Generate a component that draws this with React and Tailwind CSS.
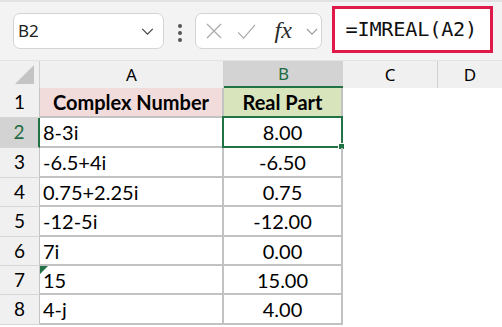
import { Fragment } from "react";

const rows = [
  { n: 1, a: "Complex Number", b: "Real Part", h: "h-[30px]", head: true },
  { n: 2, a: "8-3i", b: "8.00", h: "h-[30px]", selected: true },
  { n: 3, a: "-6.5+4i", b: "-6.50", h: "h-[30px]" },
  { n: 4, a: "0.75+2.25i", b: "0.75", h: "h-[29px]" },
  { n: 5, a: "-12-5i", b: "-12.00", h: "h-[30px]" },
  { n: 6, a: "7i", b: "0.00", h: "h-[29px]" },
  { n: 7, a: "15", b: "15.00", h: "h-[29px]", flag: true },
  { n: 8, a: "4-j", b: "4.00", h: "h-[30px]" }
];

function Chevron({ className }) {
  return (
    <svg viewBox="0 0 14 8" className={className} fill="none" stroke="currentColor" strokeWidth="1.4">
      <path d="M1 1l6 6 6-6" />
    </svg>
  );
}

export default function App() {

  return (

    <div className="w-[502px] h-[327px] overflow-hidden bg-white font-['Lato',sans-serif] text-black">

      {/* TOOLBAR */}

      <div className="h-[60px] bg-[#f3f3f3] border-t-2 border-[#e2e2e2] flex items-start">

        <div className="ml-[13px] mt-[11px] w-[151px] h-[36px] bg-white border border-[#d4d4d4] rounded-[7px] flex items-center justify-between pl-[4px] pr-[9px]">
          <span className="font-['Noto_Sans',sans-serif] text-[17px] text-[#222]">B2</span>
          <Chevron className="w-[13px] h-[7px] text-[#444]" />
        </div>

        <div className="ml-[14px] mt-[22px] flex flex-col gap-[3.5px]">
          <span className="w-[3.5px] h-[3.5px] rounded-full bg-[#555]" />
          <span className="w-[3.5px] h-[3.5px] rounded-full bg-[#555]" />
          <span className="w-[3.5px] h-[3.5px] rounded-full bg-[#555]" />
        </div>

        <div className="ml-[13px] mt-[11px] w-[127px] h-[36px] bg-white border border-[#d4d4d4] rounded-[7px] flex items-center pl-[9px]">
          <svg viewBox="0 0 18 18" className="w-[18px] h-[18px]" fill="none" stroke="#a8a8a8" strokeWidth="1.2">
            <path d="M2 2l14 14M16 2L2 16" />
          </svg>
          <svg viewBox="0 0 20 16" className="ml-[14px] w-[19px] h-[15px]" fill="none" stroke="#a8a8a8" strokeWidth="1.2">
            <path d="M1 9l6 6L19 1" />
          </svg>
          <span className="ml-[19px] font-['Liberation_Serif',serif] italic text-[24px] leading-none text-[#2a2a2a] -mt-[3px]">fx</span>
          <Chevron className="ml-[14px] w-[12px] h-[7px] text-[#999]" />
        </div>

        <div className="ml-[10px] mt-[4px] w-[161px] h-[47px] bg-white border-[3px] border-[#e0194b] flex items-center pl-[11px]">
          <span className="font-['DejaVu_Sans_Mono',monospace] text-[20.2px] text-[#111] tracking-[-0.2px]">=IMREAL(A2)</span>
        </div>

      </div>

      {/* COLUMN HEADERS */}

      <div className="flex h-[28px] bg-[#f0f0f0] font-['Noto_Sans',sans-serif] text-[17px] border-t border-[#e4e4e4]">
        <div className="w-[40px] border-r border-[#d0d0d0] flex items-end justify-end pr-[5px] pb-[4px]">
          <svg viewBox="0 0 20 20" className="w-[19px] h-[19px]">
            <path d="M20 0V20H0Z" fill="#c4c4c4" />
          </svg>
        </div>
        <div className="w-[184px] border-r border-[#d0d0d0] flex items-center justify-center">A</div>
        <div className="w-[119px] bg-[#d3d3d3] text-[#1e6b42] border-b-2 border-[#217346] flex items-center justify-center">B</div>
        <div className="w-[95px] border-r border-[#d0d0d0] flex items-center justify-center">C</div>
        <div className="flex-1 flex items-center justify-center">D</div>
      </div>

      {/* ROWS */}

      {rows.map((r) => (
        <div key={r.n} className={`flex ${r.h} text-[20px]`}>

          <div className={`w-[40px] flex items-center justify-center text-[19px] border-b border-[#d6d6d6] ${r.selected ? "bg-[#d3d3d3] text-[#1e6b42] border-r-2 border-r-[#217346]" : "bg-[#f0f0f0] border-r border-r-[#c4c4c4]"}`}>
            {r.n}
          </div>

          <div className={`relative w-[184px] flex items-center border-r-2 border-b-2 border-[#c2c2c2] ${r.head ? "bg-[#f2dcdb] justify-center font-bold" : "pl-[3px]"}`}>
            {r.flag && (
              <svg viewBox="0 0 8 8" className="absolute left-0 top-0 w-[8px] h-[8px]">
                <path d="M0 0H8L0 8Z" fill="#217346" />
              </svg>
            )}
            {r.a}
          </div>

          <div className={`relative w-[119px] flex items-center justify-center border-r-2 border-b-2 border-[#c2c2c2] ${r.head ? "bg-[#d8e4bc] font-bold" : ""}`}>
            {r.selected && (
              <Fragment>
                <div className="absolute -left-[2px] -top-[2px] -right-[2px] -bottom-[2px] border-2 border-[#217346]" />
                <div className="absolute -right-[4px] -bottom-[4px] w-[7px] h-[7px] bg-[#217346] border border-white" />
              </Fragment>
            )}
            {r.b}
          </div>

          <div className="flex-1" />

        </div>
      ))}

    </div>

  );

}
